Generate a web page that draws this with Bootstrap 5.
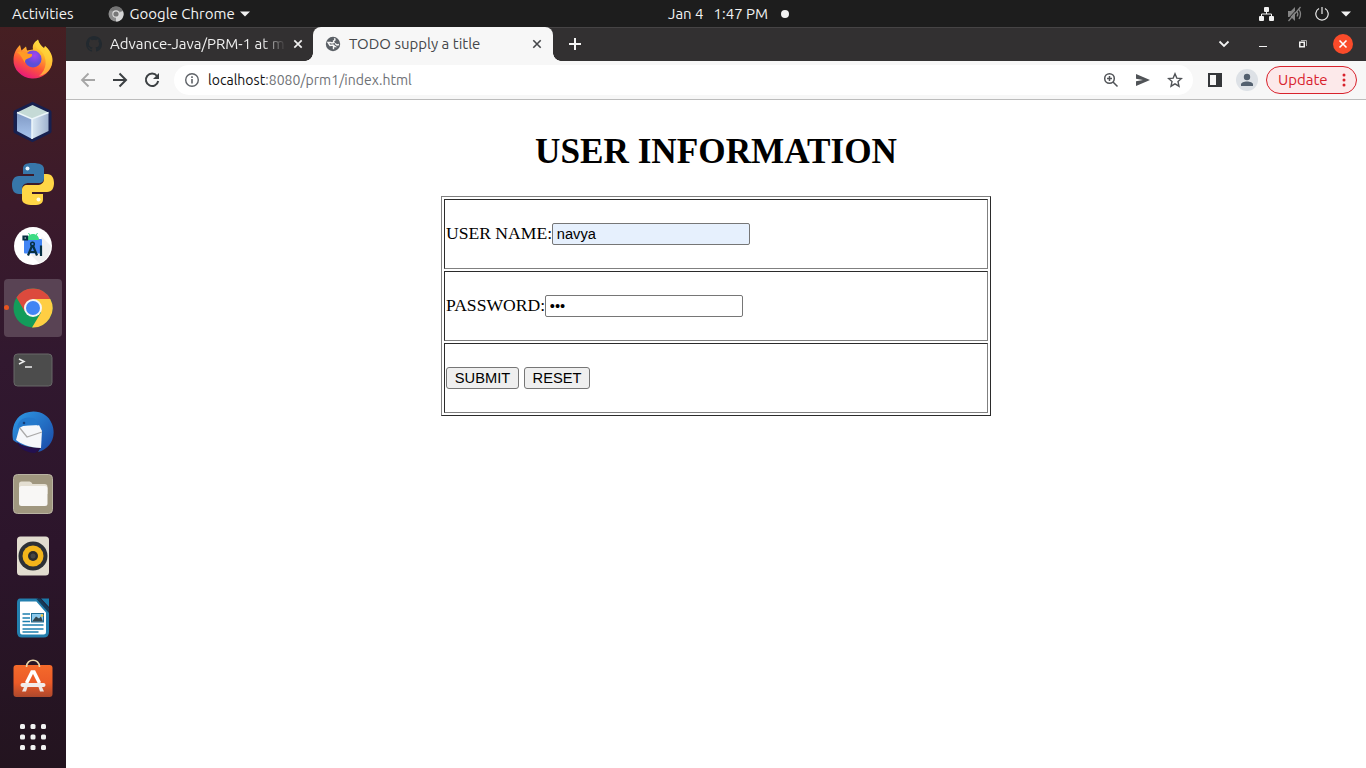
<!DOCTYPE html>
<html lang="en">
<head>
<meta charset="utf-8">
<title>TODO supply a title</title>
<meta name="viewport" content="width=device-width, initial-scale=1">
<link rel="stylesheet" href="https://cdn.jsdelivr.net/npm/bootstrap@5.3.0/dist/css/bootstrap.min.css">
<script src="https://cdn.jsdelivr.net/npm/bootstrap@5.3.0/dist/js/bootstrap.bundle.min.js"></script>
<style>
  body { font-family: Ubuntu, "Noto Sans", sans-serif; font-size: 15px; line-height: 20px; background: #fff; }
  svg { display: block; flex: none; }
  .desk { width: 1366px; height: 768px; }
  .topbar { height: 27px; background: #1d1d1d; color: #f2f2f2; padding-left: 12px; padding-right: 15px; }
  .side { width: 656px; }
  .dock { width: 66px; padding: 4px 4px 0; gap: 4px; background: linear-gradient(#461f22 0, #3b1a2b 24%, #31182f 45%, #2c152b 70%, #23141f 100%); }
  .dock-item { width: 58px; height: 58px; border-radius: 4px; flex: none; }
  .dock-item.running { background: #594354; }
  .dock-item.running::before { content: ""; position: absolute; left: 0; top: 26px; width: 5px; height: 5px; border-radius: 50%; background: #e95420; }
  .dock-item.bag { height: 56px; }
  .dock-item.apps { height: 52px; }
  .tabstrip { height: 34px; background: #323031; box-shadow: inset 0 1px #464445; }
  .tab { height: 34px; }
  .tab-back { width: 247px; padding-left: 20px; padding-right: 8px; color: #f0f0f0; }
  .fade-title { width: 176px; overflow: hidden; -webkit-mask-image: linear-gradient(90deg, #000 86%, transparent); mask-image: linear-gradient(90deg, #000 86%, transparent); }
  .tab-front { width: 240px; background: #f7f7f7; border-radius: 8px 8px 0 0; padding-left: 12px; padding-right: 10px; color: #45474a; }
  .tab-front::before, .tab-front::after { content: ""; position: absolute; bottom: 0; width: 8px; height: 8px; }
  .tab-front::before { left: -8px; background: radial-gradient(circle at 0 0, transparent 7.5px, #f7f7f7 8px); }
  .tab-front::after { right: -8px; background: radial-gradient(circle at 100% 0, transparent 7.5px, #f7f7f7 8px); }
  .toolbar { height: 39px; background: #f7f7f7; border-bottom: 1px solid #bcbcbc; padding-left: 13px; padding-right: 9px; }
  .omnibox { width: 1019px; height: 30px; border-radius: 15px; background: #fff; padding: 0 10px; margin-left: 14px; color: #6e7175; }
  .address { font-size: 14px; letter-spacing: .03px; }
  .address b { font-weight: 400; color: #111; }
  .avatar { width: 22px; height: 22px; border-radius: 50%; background: #dde1e6; overflow: hidden; }
  .update { width: 91px; height: 28px; border: 1px solid #d8222c; border-radius: 14px; background: #fce9ea; color: #d8222c; margin-left: 8px; padding: 0 10px 0 11px; }
  .close-win { width: 20px; height: 20px; border-radius: 50%; background: #fa4b2a; }

  .page { font-family: "Liberation Serif", serif; color: #000; font-size: 17.6px; line-height: 20px; }
  .page h1 { font-size: 35.2px; font-weight: 700; line-height: 40px; margin: 32px 0 24px; }
  .info { width: 550px; border: 1px solid; border-color: #808080 #2b2b2b #2b2b2b #808080; border-collapse: separate; border-spacing: 2px; }
  .info td { height: 70px; padding: 1px; border: 1px solid; border-color: #2b2b2b #808080 #808080 #2b2b2b; vertical-align: middle; }
  .info span { padding-bottom: 2px; }
  .field { width: 198px; height: 22px; border: 1px solid #767676; border-radius: 2px; padding: 0 3.7px; font: 14.667px "Liberation Sans", sans-serif; color: #000; background: #fff; }
  .field.filled { background: #e6f0fd; }
  .push { height: 22px; border: 1px solid #767676; border-radius: 3px; background: #efefef; font: 14.667px "Liberation Sans", sans-serif; color: #000; padding: 0; }
</style>
</head>
<body>
<div class="desk d-flex flex-column overflow-hidden">
  <header class="topbar d-flex align-items-center">
    <div class="side d-flex align-items-center flex-shrink-0">
      <span>Activities</span>
      <svg width="16" height="16" viewBox="0 0 16 16" style="margin-left:34px"><circle cx="8" cy="8" r="7.5" fill="#8c8c8c"/><path d="M8 8 15 5A7.5 7.5 0 0 1 8 15.5Z" fill="#d5d5d5"/><path d="M1.5 4.5A7.5 7.5 0 0 1 15 5H8Z" fill="#747474"/><circle cx="8" cy="8" r="3.7" fill="#dedede"/><circle cx="8" cy="8" r="2.6" fill="#777"/></svg>
      <span style="margin-left:6px">Google Chrome</span>
      <svg width="10" height="6" viewBox="0 0 10 6" style="margin-left:5px"><path d="M0 .5h10L5 5.5Z" fill="#f2f2f2"/></svg>
    </div>
    <div class="d-flex align-items-center"><span>Jan 4</span><span style="margin-left:10px">1:47 PM</span>
      <svg width="8" height="8" viewBox="0 0 8 8" style="margin-left:13px"><circle cx="4" cy="4" r="4" fill="#f2f2f2"/></svg></div>
    <div class="d-flex align-items-center ms-auto">
      <svg width="16" height="14" viewBox="0 0 16 14"><g fill="#f2f2f2"><rect x="5" width="5" height="5" rx="1"/><rect x="0" y="9" width="5" height="5" rx="1"/><rect x="10" y="9" width="5" height="5" rx="1"/></g><path d="M7.5 4v3M2.500 9.500V7h10v2.500" fill="none" stroke="#f2f2f2"/></svg>
      <svg width="16" height="16" viewBox="0 0 16 16" style="margin-left:12px"><path d="M1 5h3l4-4v14l-4-4H1Z" fill="#858585"/><path d="M10 5.500q1.700 2.500 0 5M12 3.500q3 4.500 0 9.500M1.500 15 13.500 1" fill="none" stroke="#858585" stroke-width="1.300"/><path d="M1 13 12 1" stroke="#1d1d1d"/></svg>
      <svg width="14" height="14" viewBox="0 0 14 14" style="margin-left:12px"><path d="M4 1.500A6.200 6.200 0 1 0 10 1.500M7 0v7" fill="none" stroke="#e8e8e8" stroke-width="1.200"/></svg>
      <svg width="10" height="6" viewBox="0 0 10 6" style="margin-left:12px"><path d="M0 .5h10L5 5.500Z" fill="#f2f2f2"/></svg>
    </div>
  </header>

  <div class="d-flex flex-grow-1">
    <nav class="dock d-flex flex-column flex-shrink-0">
      <div class="dock-item d-flex align-items-center justify-content-center">
        <svg width="42" height="42" viewBox="0 0 42 42"><defs><linearGradient id="ff" x1=".8" y1="0" x2=".3" y2="1"><stop offset="0" stop-color="#fff44f"/><stop offset=".35" stop-color="#ffb52b"/><stop offset=".65" stop-color="#ff5a36"/><stop offset="1" stop-color="#e6147f"/></linearGradient><radialGradient id="fp" cx=".6" cy=".3"><stop offset="0" stop-color="#a743f0"/><stop offset="1" stop-color="#5a4fd8"/></radialGradient></defs><path d="M1.500 20C2 14 4 10 8 6l1.500 5.500L14 7.500l1 4 6-1C20 5 23 3 26 .5c1 4 3 6 6 8.500l1-2c4 3 8 9 7.500 15A19.500 18.500 0 0 1 1.500 20Z" fill="url(#ff)"/><path d="M29 12c7 7 6 19-2 25 10-2 14-10 13-18-1-5-4-9-7-12 1 3 1 4 0 5-3-2-5-6-7-11-3 4-4 8 3 11Z" fill="#ffd63c" opacity=".65"/><circle cx="21" cy="20" r="8.500" fill="url(#fp)"/><path d="M5 13c6-2 9 2 15 2 1 3-3 4-5 5-2 0-2 3-2 4-2-3-4-8-8-11Z" fill="#ff9b24"/></svg>
      </div>
      <div class="dock-item d-flex align-items-center justify-content-center">
        <svg width="42" height="42" viewBox="0 0 42 42"><defs><linearGradient id="cl" x2="0" y2="1"><stop stop-color="#7f98c4"/><stop offset="1" stop-color="#a9c6ee"/></linearGradient><linearGradient id="cr"><stop stop-color="#dbe9f3"/><stop offset="1" stop-color="#9fb2cf"/></linearGradient></defs><path d="M20.500 3 37.500 11v19.500L20.500 39 3.500 30.500V11Z" fill="#17204f" stroke="#17204f" stroke-width="4" stroke-linejoin="round"/><path d="m5 11.500 15.500-7.500 16 7.500L20 18.500Z" fill="#c5dad6"/><path d="M5 11.500 20 18v20L5 30Z" fill="url(#cl)"/><path d="m20 18 16.500-6.500V30L20 38Z" fill="url(#cr)"/><path d="m5 11.500 15 6.500 16.500-6.500M20 18v20" fill="none" stroke="#edf6fa" stroke-width="1.500"/></svg>
      </div>
      <div class="dock-item d-flex align-items-center justify-content-center">
        <svg width="42" height="42" viewBox="0 0 42 42"><path d="M20.500 0C13 0 11 2 11 6v5h11v2H7c-5 0-7 4-7 9s2 9 7 9h3v-5c0-4 3-6 7-6h10c3 0 5-2 5-5V6c0-4-4-6-11.500-6Z" fill="#3777aa"/><path d="M21.500 42C29 42 31 40 31 36v-5H20v-2h15c5 0 7-4 7-9s-2-9-7-9h-3v5c0 4-3 6-7 6H15c-3 0-5 2-5 5v9c0 4 4 6 11.500 6Z" fill="#ffd646"/><circle cx="15.500" cy="5.500" r="2" fill="#eaf6ff"/><circle cx="26.500" cy="36.500" r="2" fill="#fffbe0"/></svg>
      </div>
      <div class="dock-item d-flex align-items-center justify-content-center">
        <svg width="38" height="38" viewBox="0 0 38 38"><circle cx="19" cy="19" r="19" fill="#fff"/><path d="m28 10 9 9a18 18 0 0 1-12 17l-8-8Z" fill="#f1f1f1"/><rect x="10" y="12" width="18" height="14.500" rx="1" fill="#4285f4"/><path d="M13 13c0-8 12-8 12 0Z" fill="#3ddc84"/><path d="m14.500 6 1.500 2.500M23.500 6 22 8.500" stroke="#3ddc84"/><path d="M9.500 9.500h3.500v3h-3.500ZM14 28.500l4.500-11 4.500 11M15.500 25h6M27 18.500v10.500" fill="none" stroke="#073042" stroke-width="2.200"/><circle cx="18.500" cy="17" r="1.800" fill="#4285f4" stroke="#073042" stroke-width="1.500"/></svg>
      </div>
      <div class="dock-item running position-relative d-flex align-items-center justify-content-center">
        <svg width="40" height="40" viewBox="0 0 40 40"><circle cx="20" cy="20" r="19.500" fill="#139c5a"/><path d="M20 11h17.300A19.500 19.500 0 0 1 19 39.500l9-15Z" fill="#ffce43"/><path d="M3.500 9.500A19.500 19.500 0 0 1 37.300 11H20l-8.500 12Z" fill="#dc4a3d"/><circle cx="20" cy="20" r="9" fill="#f5f5f5"/><circle cx="20" cy="20" r="7" fill="#4285f4"/></svg>
      </div>
      <div class="dock-item d-flex align-items-center justify-content-center">
        <svg width="40" height="34" viewBox="0 0 40 34"><rect x="1" y="1" width="38" height="32" rx="3.500" fill="#4c4c4c" stroke="#686868"/><path d="m6 6 5 2.500L6 11" fill="none" stroke="#eee" stroke-width="1.500"/><path d="M12 14h7" stroke="#eee" stroke-width="1.500"/></svg>
      </div>
      <div class="dock-item d-flex align-items-center justify-content-center">
        <svg width="42" height="42" viewBox="0 0 42 42"><defs><linearGradient id="tb" x2="1" y2="1"><stop stop-color="#2f9be6"/><stop offset="1" stop-color="#1947a5"/></linearGradient></defs><path d="M13 2C24-2 36 2 40 13c5 13-2 25-14 28l3-5C18 38 5 33 1 29-1 17 3 6 13 2Z" fill="url(#tb)"/><path d="M5 31c8 6 16 7 24 6l-6 5C15 42 8 38 5 31Z" fill="#23104f"/><path d="m8 15 19-1 3 6-1 17C18 37 9 33 4 29Z" fill="#f5f7fa"/><path d="m7 16 8 10 15-5" fill="none" stroke="#aaa" stroke-width="1.300"/><path d="M5 18C6 8 13 5 21 7c5 2 3 5 6 8-6-3-14-1-18 1Z" fill="#2479cc"/><circle cx="12" cy="12" r="1.300" fill="#153e78"/></svg>
      </div>
      <div class="dock-item d-flex align-items-center justify-content-center">
        <svg width="40" height="40" viewBox="0 0 40 40"><rect x=".5" y=".5" width="39" height="39" rx="4" fill="#a0977f" stroke="#b9b3a2"/><path d="M6 10q0-2.500 2.500-2.500h8q2 0 3 2.500h12q3 0 3 3v7H6Z" fill="#e4dfd2"/><rect x="6" y="12" width="28.500" height="20" rx="2.500" fill="#f8f7f5"/></svg>
      </div>
      <div class="dock-item d-flex align-items-center justify-content-center">
        <svg width="34" height="40" viewBox="0 0 34 40"><rect x="1" y=".5" width="32" height="39" rx="3.500" fill="#e2dccf"/><circle cx="17" cy="20" r="14.500" fill="#2d3036"/><circle cx="17" cy="20" r="10.500" fill="#f3b51b"/><circle cx="17" cy="20" r="5" fill="#2b2b2b"/><circle cx="17" cy="20" r="2.500" fill="#454545"/></svg>
      </div>
      <div class="dock-item d-flex align-items-center justify-content-center">
        <svg width="34" height="40" viewBox="0 0 34 40"><path d="M4 2h17l10.500 12v20q0 4-4 4H6q-3.500 0-3.500-4V5Q2.500 2 4 2Z" fill="#fff" stroke="#237fae" stroke-width="3"/><path d="M20 .5h4l9 9.500v5Z" fill="#123b59"/><path d="M25 .5h8v8.500Z" fill="#1b79a9"/><path d="M6.500 16h7.500M6.500 20h7.500M6.500 23.500h7.500M6.500 27h21M6.500 31h21M6.500 34h16" stroke="#1d7fae" stroke-width="1.700"/><rect x="15.500" y="15.500" width="12" height="8.500" fill="#8cc9ec" stroke="#1d6d96"/><path d="m16 23.500 4-5 3 2 2-2 2 5Z" fill="#32464e"/><circle cx="26" cy="17.500" r="1.300" fill="#f7cb3d"/></svg>
      </div>
      <div class="dock-item bag d-flex align-items-center justify-content-center">
        <svg width="40" height="40" viewBox="0 0 40 40"><defs><linearGradient id="bag" x2="0" y2="1"><stop stop-color="#f46a2b"/><stop offset=".55" stop-color="#ec5b28"/><stop offset="1" stop-color="#ad482d"/></linearGradient></defs><rect x=".5" y="6" width="39" height="32" rx="3" fill="url(#bag)"/><path d="M13.500 8c0-9 13-9 13 0" fill="none" stroke="#e9d6a8" stroke-width="1.600"/><path d="m13.500 24 5.500-11h2l5.500 11" fill="none" stroke="#fff" stroke-width="3.500"/><rect x="7.500" y="24" width="25" height="4" rx="2" fill="#f2eceb"/><path d="m11 28-2 4.500h4l1.500-4.500M29 28l2 4.500h-4L25.500 28" fill="#eee5e2"/></svg>
      </div>
      <div class="dock-item apps d-flex align-items-center justify-content-center">
        <svg width="28" height="28" viewBox="0 0 28 28" fill="#f2f2f2"><rect x="1" y="1" width="5" height="5" rx="1.500"/><rect x="11.500" y="1" width="5" height="5" rx="1.500"/><rect x="22" y="1" width="5" height="5" rx="1.500"/><rect x="1" y="11.500" width="5" height="5" rx="1.500"/><rect x="11.500" y="11.500" width="5" height="5" rx="1.500"/><rect x="22" y="11.500" width="5" height="5" rx="1.500"/><rect x="1" y="22" width="5" height="5" rx="1.500"/><rect x="11.500" y="22" width="5" height="5" rx="1.500"/><rect x="22" y="22" width="5" height="5" rx="1.500"/></svg>
      </div>
    </nav>

    <div class="d-flex flex-column flex-grow-1">
      <div class="tabstrip d-flex align-items-center">
        <div class="tab tab-back d-flex align-items-center">
          <svg width="16" height="16" viewBox="0 0 16 16"><path fill="#22292f" d="M8 0C3.580 0 0 3.580 0 8c0 3.540 2.290 6.530 5.470 7.590.4.070.55-.17.55-.38v-1.490c-2.010.37-2.530-.49-2.690-.94-.09-.23-.48-.94-.82-1.130-.28-.15-.68-.52-.01-.53.63-.01 1.080.58 1.230.82.72 1.210 1.870.87 2.330.66.070-.52.280-.87.510-1.070-1.780-.2-3.640-.89-3.640-3.950 0-.87.310-1.590.82-2.150-.08-.2-.36-1.020.08-2.120 0 0 .67-.21 2.200.82a7.600 7.600 0 0 1 4 0c1.530-1.040 2.200-.82 2.200-.82.440 1.100.16 1.920.08 2.120.51.560.82 1.270.82 2.150 0 3.070-1.870 3.750-3.650 3.950.29.250.54.730.54 1.480v2.200c0 .21.150.46.550.38A8 8 0 0 0 16 8c0-4.420-3.580-8-8-8Z"/></svg>
          <div class="fade-title text-nowrap" style="margin-left:8px">Advance-Java/PRM-1 at m</div>
          <svg width="10" height="10" viewBox="0 0 10 10" style="margin-left:7px"><path d="m1.300 1.300 7.400 7.400m0-7.400L1.300 8.700" stroke="#f0f0f0" stroke-width="1.700"/></svg>
        </div>
        <div class="tab tab-front position-relative d-flex align-items-center">
          <svg width="16" height="16" viewBox="0 0 16 16"><circle cx="8" cy="8" r="7.200" fill="#5b6066"/><path d="M9.500 2.200 10 4 8.500 5 9 6.500 7 7l-1.500-.5L3 6.500l2 3L8 9l2 1.500H8.500v2.700M10 7.500l2 1.500 2-.5" fill="none" stroke="#f7f7f7" stroke-width="1.400"/></svg>
          <span class="text-nowrap flex-grow-1" style="margin-left:8px">TODO supply a title</span>
          <svg width="12" height="10" viewBox="0 0 12 10"><path d="m2.300 1.300 7.400 7.400m0-7.400L2.300 8.700" stroke="#45474a" stroke-width="1.600"/></svg>
        </div>
        <svg width="12" height="12" viewBox="0 0 12 12" style="margin-left:16px"><path d="M6 0v12M0 6h12" stroke="#f5f5f5" stroke-width="2"/></svg>
        <div class="d-flex align-items-center ms-auto" style="padding-right:13px">
          <svg width="12" height="8" viewBox="0 0 12 8"><path d="m1.500 1.500 4.500 4.500 4.500-4.500" fill="none" stroke="#f2f2f2" stroke-width="1.800"/></svg>
          <svg width="8" height="8" viewBox="0 0 8 8" style="margin-left:29px"><path d="M0 6.500h8" stroke="#f2f2f2"/></svg>
          <svg width="8" height="8" viewBox="0 0 8 8" style="margin-left:32px"><path d="M.75 2.250h4.500v4.500h-4.500Z" fill="none" stroke="#f2f2f2" stroke-width="1.500"/><path d="M2 .5h5.500V6" fill="none" stroke="#aaa"/></svg>
          <div class="close-win d-flex align-items-center justify-content-center" style="margin-left:26px"><svg width="10" height="10" viewBox="0 0 10 10"><path d="m1.500 1.500 7 7m0-7-7 7" stroke="#fff" stroke-width="1.600"/></svg></div>
        </div>
      </div>

      <div class="toolbar d-flex align-items-center">
        <svg width="18" height="16" viewBox="0 0 18 16"><path d="M16 8H3m6.500-6.500L3 8l6.500 6.500" fill="none" stroke="#a6a6a6" stroke-width="1.800"/></svg>
        <svg width="16" height="16" viewBox="0 0 16 16" style="margin-left:15px"><path d="M1 8h13M7.500 1.500 14 8l-6.500 6.500" fill="none" stroke="#3c4043" stroke-width="2"/></svg>
        <svg width="16" height="16" viewBox="0 0 16 16" style="margin-left:16px"><path d="M13 4a6.200 6.200 0 1 0 1.200 5" fill="none" stroke="#3c4043" stroke-width="2"/><path d="M15 1v6H9Z" fill="#3c4043"/></svg>
        <div class="omnibox d-flex align-items-center">
          <svg width="16" height="16" viewBox="0 0 16 16"><circle cx="8" cy="8" r="6.300" fill="none" stroke="#5f6368" stroke-width="1.400"/><path d="M8 7v4.500M8 4.300v1.600" stroke="#5f6368" stroke-width="1.600"/></svg>
          <span class="address flex-grow-1" style="margin-left:8px"><b>localhost</b>:8080/prm1/index.html</span>
          <svg width="16" height="16" viewBox="0 0 16 16"><circle cx="6.500" cy="6.500" r="4.800" fill="none" stroke="#505357" stroke-width="1.500"/><path d="m10 10 4.500 4.500M6.500 4v5M4 6.500h5" stroke="#505357" stroke-width="1.500"/></svg>
          <svg width="16" height="16" viewBox="0 0 16 16" style="margin-left:16px"><path d="m1 2 14 6-14 6V9.300L8 8 1 6.700Z" fill="#505357"/></svg>
          <svg width="16" height="16" viewBox="0 0 16 16" style="margin-left:16px"><path d="m8 1.800 1.800 4.300 4.700.4L11 9.600l1 4.600-4-2.400-4 2.400 1-4.600L1.500 6.500l4.700-.4Z" fill="none" stroke="#505357" stroke-width="1.400"/></svg>
        </div>
        <svg width="14" height="14" viewBox="0 0 14 14" style="margin-left:15px"><path d="M0 0h14v14H0Zm2 2v10h6V2Z" fill="#35373a" fill-rule="evenodd"/></svg>
        <div class="avatar flex-shrink-0" style="margin-left:14px"><svg width="22" height="22" viewBox="0 0 22 22" fill="#53606f"><circle cx="11" cy="8" r="3.200"/><path d="M5 17v-1.500c0-4 12-4 12 0V17Z"/></svg></div>
        <div class="update d-flex align-items-center justify-content-between"><span>Update</span><svg width="4" height="14" viewBox="0 0 4 14" fill="#d8222c"><circle cx="2" cy="2" r="1.500"/><circle cx="2" cy="7" r="1.500"/><circle cx="2" cy="12" r="1.500"/></svg></div>
      </div>

      <main class="page d-flex flex-column align-items-center flex-grow-1">
        <h1>USER INFORMATION</h1>
        <form>
          <table class="info">
            <tr><td><div class="d-flex align-items-center"><span>USER NAME:</span><input class="field filled" type="text" value="navya"></div></td></tr>
            <tr><td><div class="d-flex align-items-center"><span>PASSWORD:</span><input class="field" type="password" value="123"></div></td></tr>
            <tr><td><div class="d-flex align-items-center"><button class="push" type="button" style="width:73px">SUBMIT</button><button class="push" type="reset" style="width:66px;margin-left:5px">RESET</button></div></td></tr>
          </table>
        </form>
      </main>
    </div>
  </div>
</div>
</body>
</html>
